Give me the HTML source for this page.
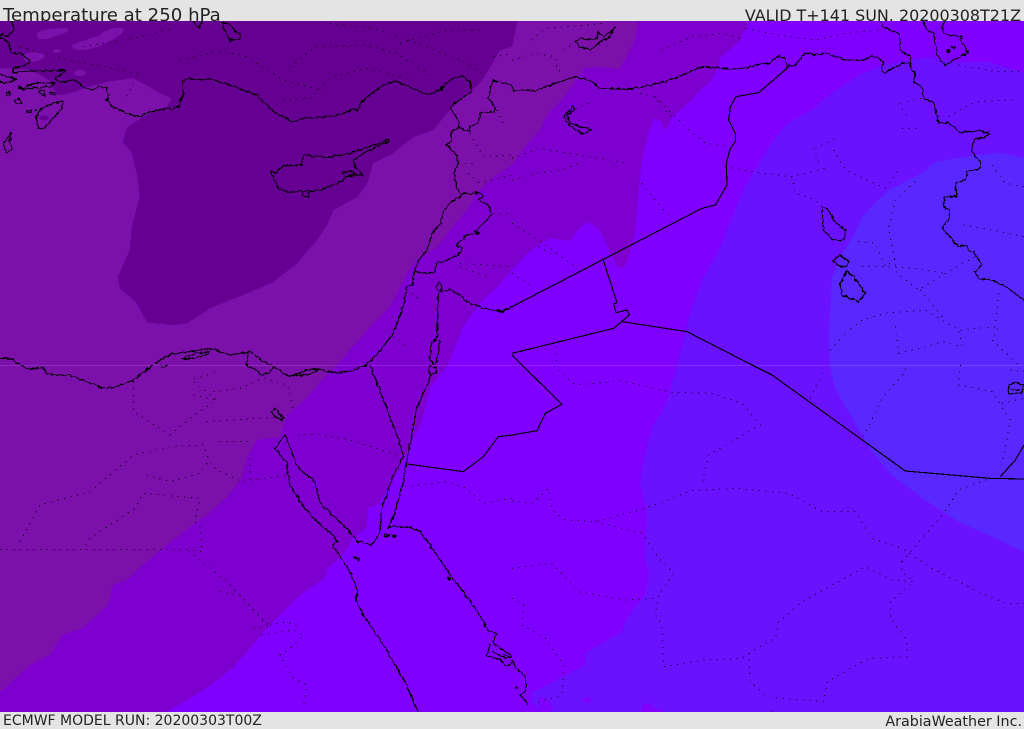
<!DOCTYPE html>
<html><head><meta charset="utf-8"><style>
html,body{margin:0;padding:0;background:#e4e4e4}
svg{display:block}
text{font-family:"DejaVu Sans",sans-serif;fill:#222}
.c{fill:none;stroke:#000;stroke-width:3.4;stroke-linejoin:round;shape-rendering:crispEdges}
.j{filter:url(#j)}
.d{fill:none;stroke:#000;stroke-width:3;stroke-dasharray:3 17;shape-rendering:crispEdges}
</style></head><body>
<svg width="1024" height="729" viewBox="0 0 1024 729" xmlns="http://www.w3.org/2000/svg">
<defs>
<filter id="j" filterUnits="userSpaceOnUse" x="-50" y="-50" width="1700" height="1200">
<feTurbulence type="fractalNoise" baseFrequency="0.09" numOctaves="2" seed="4" result="n"/>
<feDisplacementMap in="SourceGraphic" in2="n" scale="11" xChannelSelector="R" yChannelSelector="G"/>
</filter>
</defs>
<rect width="1024" height="729" fill="#e4e4e4"/>
<text x="3" y="21" font-size="18.15">Temperature at 250 hPa</text>
<text x="1021" y="21" font-size="15.95" text-anchor="end">VALID T+141 SUN. 20200308T21Z</text>
<text x="3" y="725" font-size="14">ECMWF MODEL RUN: 20200303T00Z</text>
<text x="1022" y="726" font-size="14.3" text-anchor="end">ArabiaWeather Inc.</text>
<svg x="0" y="21" width="1024" height="691" viewBox="0 21 1024 691">
<rect x="0" y="21" width="1024" height="691" fill="#7b10ab"/>
<!-- darkest -->
<path fill="#660092" stroke="#660092" stroke-width=".5" d="M0 21H517L512 46L500 50L490 67L480 83L460 100L447 113L433 130L413 137L393 153L373 163L367 183L357 197L333 210L328 223L317 240L297 263L273 282L247 293L210 308L187 323L173 325L147 322L137 303L120 288L118 277L130 250L132 227L140 197L137 173L132 153L123 142L127 128L143 117L167 107L172 98L160 93L150 87L133 78L110 81L90 86L70 93L57 95L50 81L43 76L33 71L17 68L0 68Z"/>
<g fill="#7b10ab">
<path d="M37 33Q45 28 68 28Q72 32 55 36Q40 42 37 37Z"/>
<path d="M72 45Q82 41 100 35Q108 27 122 28Q128 32 112 40Q95 50 80 50Q72 50 72 45Z"/>
<path d="M24 54Q35 50 45 55Q43 62 28 62Q22 60 24 54Z"/>
<ellipse cx="57" cy="51" rx="4" ry="2"/>
<ellipse cx="80" cy="73" rx="6" ry="3"/>
</g>
<ellipse cx="44" cy="118" rx="5" ry="2.5" fill="#660092"/>
<!-- L2 -->
<path fill="#7e00cf" d="M638 21L635 40L625 60L619 69L599 67L585 68L575 82L562 100L549 112L540 130L525 147L512 165L490 180L477 193L467 210L450 230L437 247L417 260L407 273L390 307L370 327L337 365L320 382L307 398L287 415L280 437L257 440L247 458L242 478L227 497L207 515L190 527L167 545L143 565L127 580L113 585L108 605L83 628L62 635L50 655L30 665L0 692V712H1024V21Z"/>
<!-- L3 -->
<path fill="#7f00ff" d="M750 21L739 42L720 58L719 65L712 80L702 88L692 100L672 117L667 128L664 130L662 122L654 118L649 132L642 160L639 187L635 233L630 253L624 268L617 267L609 250L600 230L589 222L580 227L570 241L549 238L529 252L512 270L497 287L480 303L463 327L448 365L430 388L423 418L408 452L390 485L378 505L368 508L367 528L353 538L343 555L328 568L325 578L300 595L270 625L250 648L233 668L207 688L167 712H1024V21Z"/>
<!-- L4 -->
<path fill="#6a12ff" d="M1024 73L989 62L959 62L929 57L910 60L882 65L859 75L832 93L812 110L789 122L775 137L759 163L745 187L735 210L719 250L702 280L689 317L677 365L667 402L652 428L644 458L640 482L647 515L644 555L649 575L645 595L627 618L622 632L585 653L585 665L562 677L532 693L532 702L542 712H1024Z"/>
<g fill="#7f00ff">
<path d="M539 697L548 699L553 708L550 712H539Z"/>
<path d="M584 698L590 697L591 701L587 703L584 701Z"/>
<path d="M640 712L644 704L650 703L655 708L662 709V712Z"/>
</g>
<!-- L5 -->
<path fill="#5927ff" d="M1024 158L1002 153L975 155L935 162L922 173L889 190L875 203L862 217L855 233L842 253L832 277L829 333L830 365L835 388L852 418L872 452L892 475L922 498L959 522L995 538L1024 552Z"/>
<rect x="0" y="365" width="1024" height="1" fill="#fff" opacity=".13"/>

<!-- NW quadrant -->
<g transform="scale(.33333)">
<path class="c j" d="M35 63L40 90L25 110L5 100L0 115L25 125L35 160L60 160L80 175L92 185L75 195L40 205L40 220L60 215L150 212L200 210L165 235L175 245L190 245L225 240L250 262L280 270L295 258L320 265L325 285L320 300L335 320L370 335L395 345L420 348L470 330L520 325L535 320L550 280L548 245L565 235L640 240L700 260L770 285L820 335L880 365L910 355L1000 348L1030 340L1065 325L1070 335L1090 300L1150 255L1190 243L1215 255L1285 285L1320 270L1330 258L1360 235L1385 228L1410 245L1415 275L1385 295L1350 322L1378 365L1375 385L1355 395L1355 420L1340 435L1370 465L1375 490L1362 520L1370 560L1383 590L1355 605L1330 630L1322 670L1300 695L1280 750L1250 790L1240 830L1238 855L1220 860L1210 920L1180 1000L1130 1065L1095 1095"/>
<path class="c j" d="M810 510L825 520L850 498L905 495L912 465L980 472L1040 462L1080 450L1165 420L1165 425L1090 460L1062 480L1065 500L1090 528L1060 520L1040 530L1020 545L970 568L925 575L900 572L870 578L835 565L820 530ZM1025 518L1060 512L1060 528L1035 530ZM908 574L925 574L926 590L912 590Z"/>
<path class="c j" d="M190 305L185 325L160 355L130 385L115 385L108 350L125 325L165 308Z"/>
<path class="c j" d="M33 397L30 425L38 445L20 460L10 430L25 410Z"/>
<path class="c j" d="M580 63L595 85L607 63M665 68L685 70L720 105L720 115L690 123L680 100Z"/>
<path class="c j" d="M0 222L30 232L50 238L15 250L0 245M55 258L65 265L100 250L165 248L155 258L70 268L55 265ZM20 278H30V285H20ZM45 300L55 296L68 308L50 310ZM80 333H95V337H80ZM118 275L133 272L135 288L122 285ZM148 278H165V283H150ZM105 328H110V332H105Z"/>
<path class="c j" d="M1320 262L1335 258L1325 272Z"/>
<path class="c j" d="M0 1075L40 1078L60 1095M465 1090L515 1062L550 1058L630 1045L690 1065L750 1055L790 1085L815 1095M545 1075L590 1060L630 1055L620 1065L560 1078ZM745 1060L740 1095"/>
<path class="c j" d="M1478 242L1465 295L1485 320L1485 335L1440 340L1435 368L1410 378L1408 397L1375 380M1478 242L1536 255"/>
<path class="c j" d="M1383 580H1430L1428 572L1450 590L1435 600L1465 615L1475 645L1450 670L1425 695L1440 700L1400 705L1370 735L1388 745L1375 765L1340 780L1310 790L1305 815L1280 820L1245 815"/>
<path class="c j" d="M1320 875L1350 870L1380 885L1400 905L1450 925L1505 935L1536 920"/>
<path class="c j" d="M1318 848L1308 860L1318 875L1328 860ZM1315 880L1310 1020L1295 1025L1290 1080L1305 1095L1315 1060L1318 1020"/>
<path class="d" d="M250 140L400 115L520 85M60 140L200 180L370 210L420 225M540 180L650 155L730 165L850 240L960 270M850 300L930 295L1000 230L1100 205L1240 240M870 200L950 140L1100 135L1190 160L1300 230M990 70L1120 85L1250 130L1380 180L1450 220M1200 130L1340 90L1440 90M1480 170L1536 160M1235 880L1260 900M1180 1010L1220 1040M1380 790L1530 800M1410 400L1450 470L1536 465M1375 490L1430 490M1405 520L1440 550L1536 525M1480 640L1536 640M1490 330L1510 370M400 250L375 300M1380 800L1460 830"/>
</g>

<!-- NE quadrant -->
<g transform="translate(512,0) scale(.33333)">
<path class="c j" d="M0 260L5 272L70 272L130 250L190 230L235 242L265 265L345 268L420 255L490 235L570 200L640 205L690 205L775 188L800 167L820 178L825 200L850 195L882 158L905 165L940 160L1000 180L1050 183L1080 167L1110 180L1115 192L1105 205L1115 220L1130 212L1170 190L1195 188"/>
<path class="c j" d="M1108 63L1110 80L1160 100L1165 150L1195 170L1195 205L1210 220L1205 245L1230 262L1235 295L1265 310L1280 370L1310 368L1345 398L1395 392L1430 400L1420 410L1385 420L1378 455L1405 485L1405 505L1365 515L1360 540L1330 550L1335 590L1300 590L1295 620L1312 630L1312 655L1290 683L1340 740L1365 735L1372 755L1385 755L1410 795L1388 815L1400 835L1440 840L1490 865L1536 900"/>
<path class="c" d="M0 920L570 625L610 615L645 555L643 490L655 445L670 425L670 400L650 360L655 320L672 290L740 278L825 205"/>
<path class="c" d="M272 775L315 908L305 912L312 938L345 930L352 945L305 985L0 1060"/>
<path class="c" d="M330 965L525 995L720 1095"/>
<path class="c" d="M0 1065L30 1095"/>
<path class="c j" d="M190 125L205 115L225 118L255 115L258 95L275 112L300 90L308 78L295 110L265 125L235 150L205 140Z"/>
<path class="c j" d="M183 318L188 330L165 345L175 370L205 380L240 390L225 398L205 400L175 378L155 350Z"/>
<path class="c j" d="M932 625L945 625L970 665L1000 690L995 722L960 718L935 690L930 640Z"/>
<path class="c j" d="M970 775L985 765L1010 785L1005 800L985 800L965 785Z"/>
<path class="c j" d="M1003 815L1025 830L1060 880L1040 905L990 885L985 850Z"/>
<path class="c j" d="M1235 63L1240 85L1265 100L1275 165L1300 197L1325 180L1368 158L1345 120L1350 110L1295 100L1290 80L1300 63M1305 150L1312 148L1310 160ZM1318 140L1330 138L1325 145Z"/>
<path class="d" d="M0 180L70 160L130 170L135 210L150 215M60 120L100 85L280 70M155 150L190 125M450 150L540 110L630 100L700 120M700 85L800 105L910 120L1000 100L1100 90M430 290L520 380L580 430L650 440M385 280L430 290L450 325L480 350M0 475L80 445L200 465L350 490M0 540L70 520L150 510L200 490M230 310L160 340M390 550L430 600L470 650M0 670L80 720L190 800M80 740L130 770M0 820L60 860M640 500L720 515L840 530L940 505M840 530L850 580L910 600L935 625M910 445L970 415M905 445L925 500M965 450L1000 510L1120 565L1160 510M1210 545L1150 600L1130 680L1140 740L1155 820L1220 870L1300 820L1390 770M1040 725L1090 730L1120 800L1160 770M1050 800L1120 800L1205 805L1300 820M1355 675L1440 690L1536 710M1165 310L1230 295M1170 385L1220 385M1160 310L1190 355M1310 350L1390 305L1510 300M1340 195L1450 215L1536 215M1440 495L1480 550L1536 560M1000 1000L1050 960L1120 940L1240 930L1340 990L1460 980L1440 1020L1520 1095M1150 980L1160 1060L1240 1040L1290 1025L1350 1040L1340 990M1225 870L1290 950M1460 880L1450 980M955 1050L1000 1000M130 1040L135 1090"/>
</g>

<!-- SW quadrant -->
<g transform="translate(0,365) scale(.33333)">
<path class="c j" d="M60 0L85 12L130 8L140 28L210 30L310 70L350 65L400 45L460 0M735 0L770 15L785 30L810 22L820 5L870 35L940 10L1010 25L1060 15L1100 0"/>
<path class="c j" d="M875 32L920 15L960 12L925 30Z"/>
<path class="c j" d="M480 0L490 8L505 0M1290 3L1310 10L1310 25L1290 25L1285 10ZM1295 28L1250 130L1225 265"/>
<path class="c j" d="M1110 0L1160 130L1205 250L1210 275L1180 330L1145 430L1140 505L1115 540L1075 530L1020 470L960 415L945 350L890 305L875 260L855 210L825 250L860 290L870 360L900 410L950 470L1000 510L1012 530L997 540L1010 560L1050 620L1075 680L1065 705L1090 750L1160 855L1220 960L1252 1040"/>
<path class="c j" d="M1225 265L1210 350L1185 440L1165 490L1175 483L1235 488L1260 500L1305 560L1350 630L1390 680L1440 750L1465 798L1490 805L1480 835L1510 855L1536 875"/>
<path class="c" d="M1222 297L1390 320L1450 275L1495 215L1536 210"/>
<path class="c j" d="M815 140L825 130L840 150L855 160L845 165L825 155ZM1152 505L1170 512L1155 515ZM1178 510L1188 512L1180 516ZM1065 576L1080 582L1078 587L1063 580ZM1345 635L1350 642L1345 645Z"/>
<path class="c j" d="M1470 835L1465 860L1460 870L1500 885L1520 905L1536 892M1475 860L1520 880M1510 870L1536 878"/>
<path class="d" d="M400 50L400 140L510 210L590 145L650 105L575 45L650 20M0 553L560 553L605 560L600 480L585 470L600 400L430 385L405 430L270 520L250 553M60 530L120 420L270 380L400 270L510 245L610 240L625 280L650 315L725 350L860 330M440 330L510 350L600 325L625 290M640 80L720 70L790 40L865 60L880 130M620 170L700 165L860 155M660 230L750 230M750 280L750 350M895 210L950 208L1050 225L1200 272M565 560L620 600L680 650L810 785L760 790M660 680L720 690L800 780M785 810L880 795L910 810L870 850L840 870L880 940L920 960L910 1030M810 780L860 770L905 790M1215 365L1340 350L1400 370L1450 415L1536 400M580 90L650 105"/>
</g>

<!-- SE quadrant -->
<g transform="translate(512,365) scale(.33333)">
<path class="c" d="M720 0L780 30L1180 318L1435 340L1536 342M1465 335L1510 285L1536 240M30 0L150 118L100 145L75 197L0 210"/>
<path class="c j" d="M0 885L10 905L40 935L42 975L25 990L50 1020M10 966L16 970L10 972Z"/>
<path class="c j" d="M1490 60L1510 52L1535 60L1530 85L1490 85ZM1495 72L1525 75"/>
<path class="d" d="M140 15L190 60L330 48L480 82L600 85L690 115L745 180L590 270L570 355M0 408L60 415L110 370L120 435L160 465L250 470L400 430L540 377L670 370L830 385L930 440L1030 440L1080 520L1170 550L1260 610L1400 680L1480 715L1536 715M250 470L390 505L440 580L485 625L440 690L430 750L450 780L455 905L575 885L690 880L750 840L790 820L800 772L870 710L1060 605L1140 645L1205 650L1135 710L1135 760L1185 825L1185 875L1070 880L945 950L935 1010L800 1000L760 990L715 950L710 880M0 610L120 595L200 680L340 705L430 700M0 700L35 720L30 780L100 820L155 900L150 990L70 1015M1170 590L1295 445L1340 375L1435 340M1170 590L1170 620L1205 650M895 100L935 15M1055 215L1110 100L1180 20L1180 0M1345 0L1340 60L1440 80L1495 165L1470 300M1470 115L1536 100M1495 15L1536 20M780 1040L785 1020"/>
</g>
</svg>
</svg>
</body></html>
